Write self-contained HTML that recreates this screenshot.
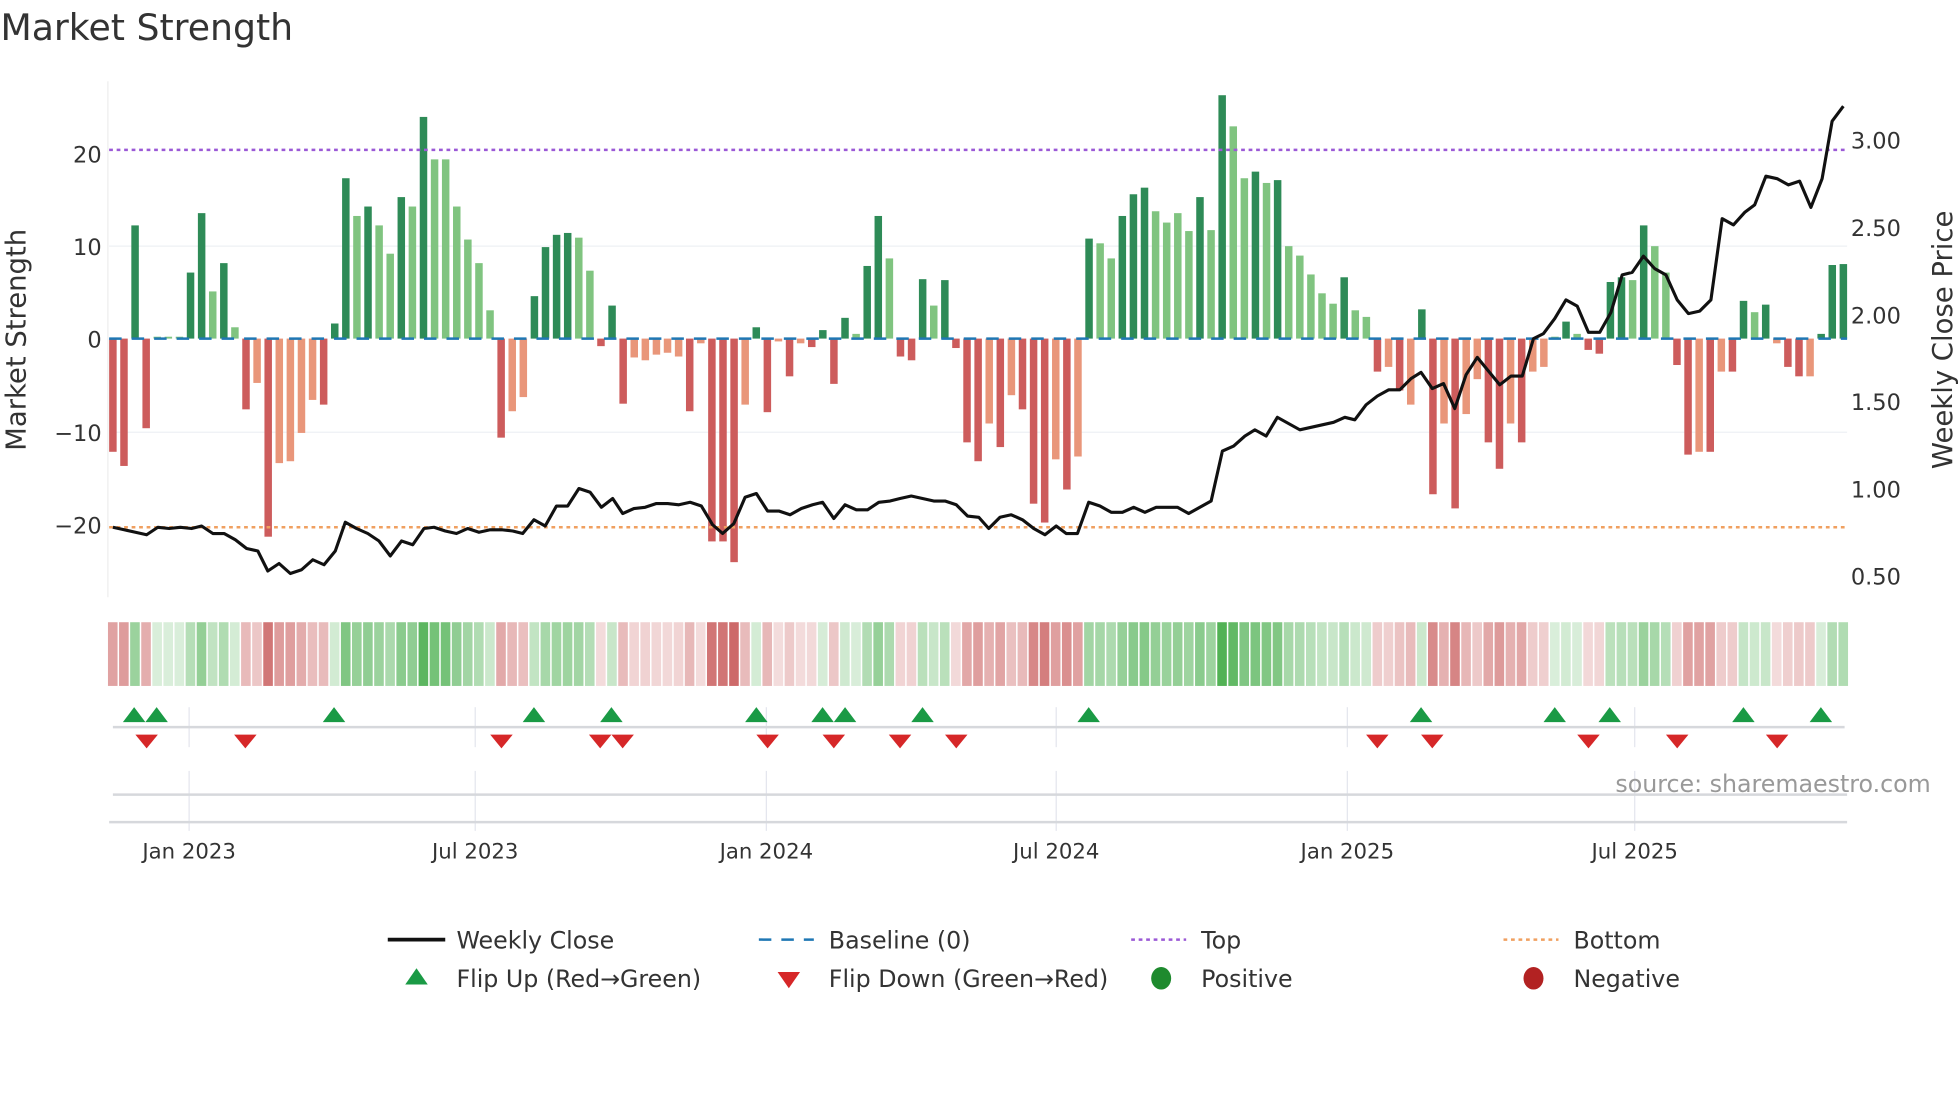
<!DOCTYPE html>
<html><head><meta charset="utf-8"><style>
html,body{margin:0;padding:0;background:#fff;width:1960px;height:1102px;overflow:hidden}
svg{display:block}
text{font-family:"DejaVu Sans","Liberation Sans",sans-serif;fill:#333}
</style></head><body>
<svg id="s" width="1960" height="1102" viewBox="0 0 1568 882" xmlns="http://www.w3.org/2000/svg">
<text x="0" y="32" font-size="29">Market Strength</text>
<line x1="86" y1="65" x2="86" y2="478" stroke="#eee"/>
<line x1="87" y1="197" x2="1478" y2="197" stroke="#eef0f4"/>
<line x1="87" y1="346" x2="1478" y2="346" stroke="#eef0f4"/>
<g id="bars"></g>
<line x1="87" y1="271" x2="1478" y2="271" stroke="#1f77b4" stroke-width="2" stroke-dasharray="10,8"/>
<line x1="87" y1="120" x2="1478" y2="120" stroke="#9b59d6" stroke-width="2" stroke-dasharray="3,3"/>
<line x1="87" y1="422" x2="1478" y2="422" stroke="#f0a060" stroke-width="2" stroke-dasharray="3,3"/>
<polyline id="price" fill="none" stroke="#111" stroke-width="2.5" stroke-linejoin="round"/>
<g font-size="18" text-anchor="end">
<text x="81" y="130">20</text><text x="81" y="204">10</text><text x="81" y="278">0</text><text x="81" y="353">−10</text><text x="81" y="427">−20</text>
</g>
<text font-size="22" transform="translate(20,272) rotate(-90)" text-anchor="middle">Market Strength</text>
<g font-size="18">
<text x="1481" y="119">3.00</text><text x="1481" y="189">2.50</text><text x="1481" y="259">2.00</text><text x="1481" y="328">1.50</text><text x="1481" y="398">1.00</text><text x="1481" y="468">0.50</text>
</g>
<text font-size="22" transform="translate(1562,272) rotate(-90)" text-anchor="middle">Weekly Close Price</text>
<g id="heat"></g>
<g stroke="#e4e6ee" stroke-width="1">
<line x1="151" y1="566" x2="151" y2="598"/><line x1="380" y1="566" x2="380" y2="598"/><line x1="613" y1="566" x2="613" y2="598"/><line x1="845" y1="566" x2="845" y2="598"/><line x1="1078" y1="566" x2="1078" y2="598"/><line x1="1308" y1="566" x2="1308" y2="598"/>
<line x1="151" y1="617" x2="151" y2="665"/><line x1="380" y1="617" x2="380" y2="665"/><line x1="613" y1="617" x2="613" y2="665"/><line x1="845" y1="617" x2="845" y2="665"/><line x1="1078" y1="617" x2="1078" y2="665"/><line x1="1308" y1="617" x2="1308" y2="665"/>
</g>
<line x1="90" y1="582" x2="1476" y2="582" stroke="#d6d8dc" stroke-width="2"/>
<line x1="90" y1="636" x2="1478" y2="636" stroke="#d6d8dc" stroke-width="2"/>
<line x1="87" y1="658" x2="1478" y2="658" stroke="#d6d8dc" stroke-width="2"/>
<g id="flips"></g>
<text x="1545" y="634" font-size="19" text-anchor="end" style="fill:#999">source: sharemaestro.com</text>
<g font-size="17" text-anchor="middle">
<text x="151" y="687">Jan 2023</text><text x="380" y="687">Jul 2023</text><text x="613" y="687">Jan 2024</text><text x="845" y="687">Jul 2024</text><text x="1078" y="687">Jan 2025</text><text x="1308" y="687">Jul 2025</text>
</g>
<g font-size="19">
<line x1="310" y1="752" x2="356" y2="752" stroke="#111" stroke-width="3"/><text x="365" y="759">Weekly Close</text>
<line x1="607" y1="752" x2="651" y2="752" stroke="#1f77b4" stroke-width="2" stroke-dasharray="10,8"/><text x="663" y="759">Baseline (0)</text>
<line x1="905" y1="752" x2="949" y2="752" stroke="#9b59d6" stroke-width="2" stroke-dasharray="3,3"/><text x="961" y="759">Top</text>
<line x1="1203" y1="752" x2="1247" y2="752" stroke="#f0a060" stroke-width="2" stroke-dasharray="3,3"/><text x="1259" y="759">Bottom</text>
<polygon points="324,788 342,788 333,775" fill="#1a9a45"/><text x="365" y="790">Flip Up (Red→Green)</text>
<polygon points="622,778 640,778 631,791" fill="#d62728"/><text x="663" y="790">Flip Down (Green→Red)</text>
<ellipse cx="929" cy="783" rx="8" ry="9" fill="#1e8a2e"/><text x="961" y="790">Positive</text>
<ellipse cx="1227" cy="783" rx="8" ry="9" fill="#b22222"/><text x="1259" y="790">Negative</text>
</g>
</svg>
<script>
var NS="http://www.w3.org/2000/svg";
function el(p,t,a){var e=document.createElementNS(NS,t);for(var k in a)e.setAttribute(k,a[k]);p.appendChild(e);return e;}
var B=[[-12,'r'],[-13.5,'r'],[12,'d'],[-9.5,'r'],[0.2,'l'],[0.2,'l'],[0.2,'l'],[7,'d'],[13.3,'d'],[5,'l'],[8,'d'],[1.2,'l'],[-7.5,'r'],[-4.7,'s'],[-21,'r'],[-13.2,'s'],[-13,'s'],[-10,'s'],[-6.5,'s'],[-7,'r'],[1.6,'d'],[17,'d'],[13,'l'],[14,'d'],[12,'l'],[9,'l'],[15,'d'],[14,'l'],[23.5,'d'],[19,'l'],[19,'l'],[14,'l'],[10.5,'l'],[8,'l'],[3,'l'],[-10.5,'r'],[-7.7,'s'],[-6.2,'s'],[4.5,'d'],[9.7,'d'],[11,'d'],[11.2,'d'],[10.7,'l'],[7.2,'l'],[-0.8,'r'],[3.5,'d'],[-6.9,'r'],[-2,'s'],[-2.3,'s'],[-1.7,'s'],[-1.5,'s'],[-1.9,'s'],[-7.7,'r'],[-0.5,'s'],[-21.5,'r'],[-21.5,'r'],[-23.7,'r'],[-7,'s'],[1.2,'d'],[-7.8,'r'],[-0.3,'s'],[-4,'r'],[-0.5,'s'],[-0.9,'r'],[0.9,'d'],[-4.8,'r'],[2.2,'d'],[0.5,'l'],[7.7,'d'],[13,'d'],[8.5,'l'],[-1.9,'r'],[-2.3,'r'],[6.3,'d'],[3.5,'l'],[6.2,'d'],[-1,'r'],[-11,'r'],[-13,'r'],[-9,'s'],[-11.5,'r'],[-6,'s'],[-7.5,'r'],[-17.5,'r'],[-19.5,'r'],[-12.8,'s'],[-16,'r'],[-12.5,'s'],[10.6,'d'],[10.1,'l'],[8.5,'l'],[13,'d'],[15.3,'d'],[16,'d'],[13.5,'l'],[12.3,'l'],[13.3,'l'],[11.4,'l'],[15,'d'],[11.5,'l'],[25.8,'d'],[22.5,'l'],[17,'l'],[17.7,'d'],[16.5,'l'],[16.8,'d'],[9.8,'l'],[8.8,'l'],[6.8,'l'],[4.8,'l'],[3.7,'l'],[6.5,'d'],[3,'l'],[2.3,'l'],[-3.5,'r'],[-3,'s'],[-5.5,'r'],[-7,'s'],[3.1,'d'],[-16.5,'r'],[-9,'s'],[-18,'r'],[-8,'s'],[-4.3,'s'],[-11,'r'],[-13.8,'r'],[-9,'s'],[-11,'r'],[-3.5,'s'],[-3,'s'],[0.2,'l'],[1.8,'d'],[0.5,'l'],[-1.2,'r'],[-1.6,'r'],[6,'d'],[6.5,'d'],[6.2,'l'],[12,'d'],[9.8,'l'],[7,'l'],[-2.8,'r'],[-12.3,'r'],[-12,'s'],[-12,'r'],[-3.5,'s'],[-3.5,'r'],[4,'d'],[2.8,'l'],[3.6,'d'],[-0.5,'s'],[-3,'r'],[-4,'r'],[-4,'s'],[0.5,'d'],[7.8,'d'],[7.9,'d']];
var C={d:'#2e8b57',l:'#80c480',r:'#cd5c5c',s:'#e9967a'};
var bars=document.getElementById('bars'),heat=document.getElementById('heat');
var n=B.length,x0=90,dx=(1475-90)/(n-1);
for(var i=0;i<n;i++){var v=B[i][0],x=x0+i*dx,y=271-v*7.55;
 el(bars,'rect',{x:x-3,y:Math.min(y,271),width:6,height:Math.abs(271-y),fill:C[B[i][1]]});
 var a=Math.min(1,0.2+Math.abs(v)/25*0.75),col=v>=0?'76,175,80':'200,90,90';
 el(heat,'rect',{x:x-dx/2+0.5,y:498,width:dx-1.2,height:51,fill:'rgba('+col+','+a.toFixed(2)+')'});
}
var P=[[90,422],[99,424],[108,426],[117,428],[126,422],[135,423],[144,422],[153,423],[161,421],[170,427],[179,427],[188,432],[197,439],[206,441],[214,457],[223,451],[232,459],[241,456],[250,448],[259,452],[268,441],[276,418],[285,423],[294,427],[303,433],[312,445],[321,433],[330,436],[339,423],[347,422],[356,425],[365,427],[374,423],[383,426],[392,424],[401,424],[410,425],[418,427],[427,416],[436,421],[445,405],[454,405],[463,391],[472,394],[481,406],[490,399],[498,411],[507,407],[516,406],[525,403],[534,403],[543,404],[552,402],[561,405],[570,420],[578,427],[587,419],[596,398],[605,395],[614,409],[623,409],[632,412],[641,407],[650,404],[658,402],[667,415],[676,404],[685,408],[694,408],[703,402],[712,401],[720,399],[729,397],[738,399],[747,401],[756,401],[765,404],[774,413],[783,414],[791,423],[800,414],[809,412],[818,416],[827,423],[836,428],[845,421],[853,427],[862,427],[871,402],[880,405],[889,410],[898,410],[907,406],[916,410],[925,406],[933,406],[942,406],[951,411],[960,406],[969,401],[978,361],[987,357],[996,349],[1004,344],[1013,349],[1022,334],[1031,339],[1040,344],[1049,342],[1058,340],[1067,338],[1076,334],[1084,336],[1093,324],[1102,317],[1111,312],[1120,312],[1129,303],[1137,298],[1146,311],[1155,307],[1164,327],[1173,300],[1182,286],[1191,297],[1200,308],[1209,301],[1218,301],[1227,271],[1235,267],[1244,255],[1253,240],[1262,245],[1271,266],[1280,266],[1289,250],[1298,220],[1306,218],[1315,205],[1324,215],[1333,220],[1342,240],[1351,251],[1360,249],[1369,240],[1378,175],[1387,180],[1396,170],[1404,164],[1413,141],[1422,143],[1431,148],[1440,145],[1449,166],[1458,143],[1466,97],[1475,85]];
document.getElementById('price').setAttribute('points',P.map(function(p){return p.join(',')}).join(' '));
var f=document.getElementById('flips');
[107,125,267,427,489,605,658,676,738,871,1137,1244,1288,1395,1457].forEach(function(x){el(f,'polygon',{points:(x-9)+',578 '+(x+9)+',578 '+x+',566',fill:'#1a9a45'});});
[117,196,401,480,498,614,667,720,765,1102,1146,1271,1342,1422].forEach(function(x){el(f,'polygon',{points:(x-9)+',588 '+(x+9)+',588 '+x+',599',fill:'#d62728'});});
</script>
</body></html>
